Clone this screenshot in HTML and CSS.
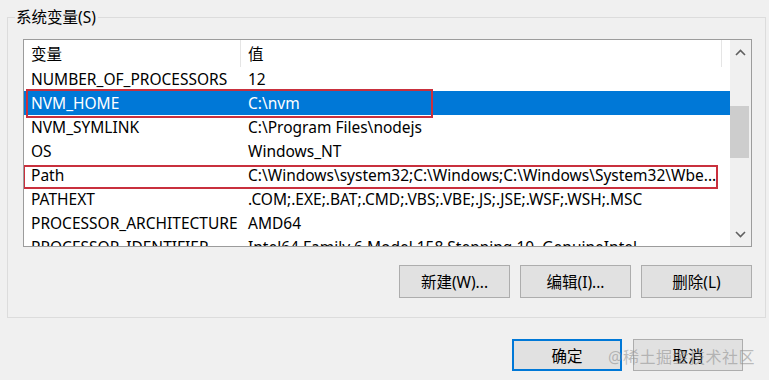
FILE: index.html
```html
<!DOCTYPE html>
<html lang="zh-CN">
<head>
  <meta charset="UTF-8">
  <title>系统变量</title>
  <link rel="stylesheet" href="styles.css">
</head>
<body>
  <!-- 系统变量分组 -->
  <fieldset class="group">
    <legend class="group-title">系统变量(S)</legend>

    <div class="listview">
      <div class="list-body">
        <div class="list-head">
          <div class="col col-name">变量</div>
          <div class="col col-value">值</div>
        </div>
        <div class="row">
          <div class="col col-name">NUMBER_OF_PROCESSORS</div>
          <div class="col col-value">12</div>
        </div>
        <div class="row selected">
          <div class="col col-name">NVM_HOME</div>
          <div class="col col-value">C:\nvm</div>
        </div>
        <div class="row">
          <div class="col col-name">NVM_SYMLINK</div>
          <div class="col col-value">C:\Program Files\nodejs</div>
        </div>
        <div class="row">
          <div class="col col-name">OS</div>
          <div class="col col-value">Windows_NT</div>
        </div>
        <div class="row">
          <div class="col col-name">Path</div>
          <div class="col col-value">C:\Windows\system32;C:\Windows;C:\Windows\System32\Wbe...</div>
        </div>
        <div class="row">
          <div class="col col-name">PATHEXT</div>
          <div class="col col-value">.COM;.EXE;.BAT;.CMD;.VBS;.VBE;.JS;.JSE;.WSF;.WSH;.MSC</div>
        </div>
        <div class="row">
          <div class="col col-name">PROCESSOR_ARCHITECTURE</div>
          <div class="col col-value">AMD64</div>
        </div>
        <div class="row">
          <div class="col col-name">PROCESSOR_IDENTIFIER</div>
          <div class="col col-value">Intel64 Family 6 Model 158 Stepping 10, GenuineIntel</div>
        </div>
      </div>

      <div class="scrollbar">
        <div class="arrow">
          <svg width="11" height="7" viewBox="0 0 11 7"><polyline points="1,6 5.5,1.5 10,6" fill="none" stroke="#606060" stroke-width="1.6"/></svg>
        </div>
        <div class="track">
          <div class="thumb"></div>
        </div>
        <div class="arrow">
          <svg width="11" height="7" viewBox="0 0 11 7"><polyline points="1,1 5.5,5.5 10,1" fill="none" stroke="#606060" stroke-width="1.6"/></svg>
        </div>
      </div>

      <!-- 标注框 -->
      <div class="mark mark-home"></div>
      <div class="mark mark-path"></div>
    </div>

    <div class="group-buttons">
      <button class="btn">新建(W)...</button>
      <button class="btn">编辑(I)...</button>
      <button class="btn">删除(L)</button>
    </div>
  </fieldset>

  <div class="dialog-buttons">
    <button class="btn btn-default">确定</button>
    <button class="btn">取消</button>
    <span class="watermark">@稀土掘金技术社区</span>
  </div>
</body>
</html>
```

FILE: styles.css
```css
body {
  margin: 0;
  width: 769px;
  height: 380px;
  overflow: hidden;
  background-color: #f0f0f0;
  font-family: "Noto Sans", "Noto Sans CJK SC", sans-serif;
  font-size: 15.5px;
  color: #000;
}
.group {
  margin: 7px 0 0 7px;
  width: 736px;
  padding: 0 13px 19px 8px;
  border: 1px solid #dcdcdc;
  box-sizing: content-box;
}
.group-title {
  margin-left: -1px;
  padding: 0 2px 0 1px;
  line-height: 20px;
  font-size: 15.5px;
}
.listview {
  position: relative;
  display: flex;
  margin: 12px 0 0 7px;
  width: 727px;
  height: 206px;
  border: 1px solid #9c9c9c;
  background-color: #fff;
  overflow: hidden;
}
.list-body {
  width: 706px;
  overflow: hidden;
}
.list-head {
  display: flex;
  height: 27px;
  align-items: stretch;
}
.list-head .col {
  line-height: 29px;
  border-right: 1px solid #e5e5e5;
}
.row {
  display: flex;
  height: 24px;
  line-height: 24px;
}
.col {
  padding-left: 7px;
  white-space: nowrap;
  overflow: hidden;
  box-sizing: border-box;
}
.col-name {
  width: 217px;
  flex: none;
}
.col-value {
  width: 481px;
  flex: none;
}
.row .col-value {
  width: 489px;
}
.row.selected {
  background-color: #0078d7;
  color: #fff;
}
.scrollbar {
  width: 21px;
  display: flex;
  flex-direction: column;
  background-color: #f0f0f0;
}
.arrow {
  height: 24px;
  display: flex;
  align-items: center;
  justify-content: center;
}
.track {
  flex: 1;
  padding-top: 42px;
}
.thumb {
  width: 19px;
  height: 52px;
  background-color: #cdcdcd;
}
.mark {
  position: absolute;
  border: 2px solid #c9303d;
  box-sizing: border-box;
}
.mark-home {
  left: 2px;
  top: 49px;
  width: 407px;
  height: 29px;
}
.mark-path {
  left: -1px;
  top: 125px;
  width: 695px;
  height: 24px;
}
.group-buttons {
  display: flex;
  justify-content: flex-end;
  gap: 10px;
  margin-top: 18px;
}
.btn {
  width: 111px;
  height: 33px;
  padding: 0;
  background-color: #e1e1e1;
  border: 1px solid #adadad;
  font-family: inherit;
  font-size: 15.5px;
  color: #000;
}
.dialog-buttons {
  position: relative;
  display: flex;
  justify-content: flex-end;
  gap: 11px;
  margin: 21px 26px 0 0;
}
.dialog-buttons .btn {
  width: 110px;
  height: 32px;
}
.btn-default {
  border: 2px solid #0078d7;
}
.watermark {
  position: absolute;
  right: -12px;
  top: 5px;
  font-size: 16px;
  color: rgba(140, 140, 140, 0.55);
  letter-spacing: 0.5px;
}
```
